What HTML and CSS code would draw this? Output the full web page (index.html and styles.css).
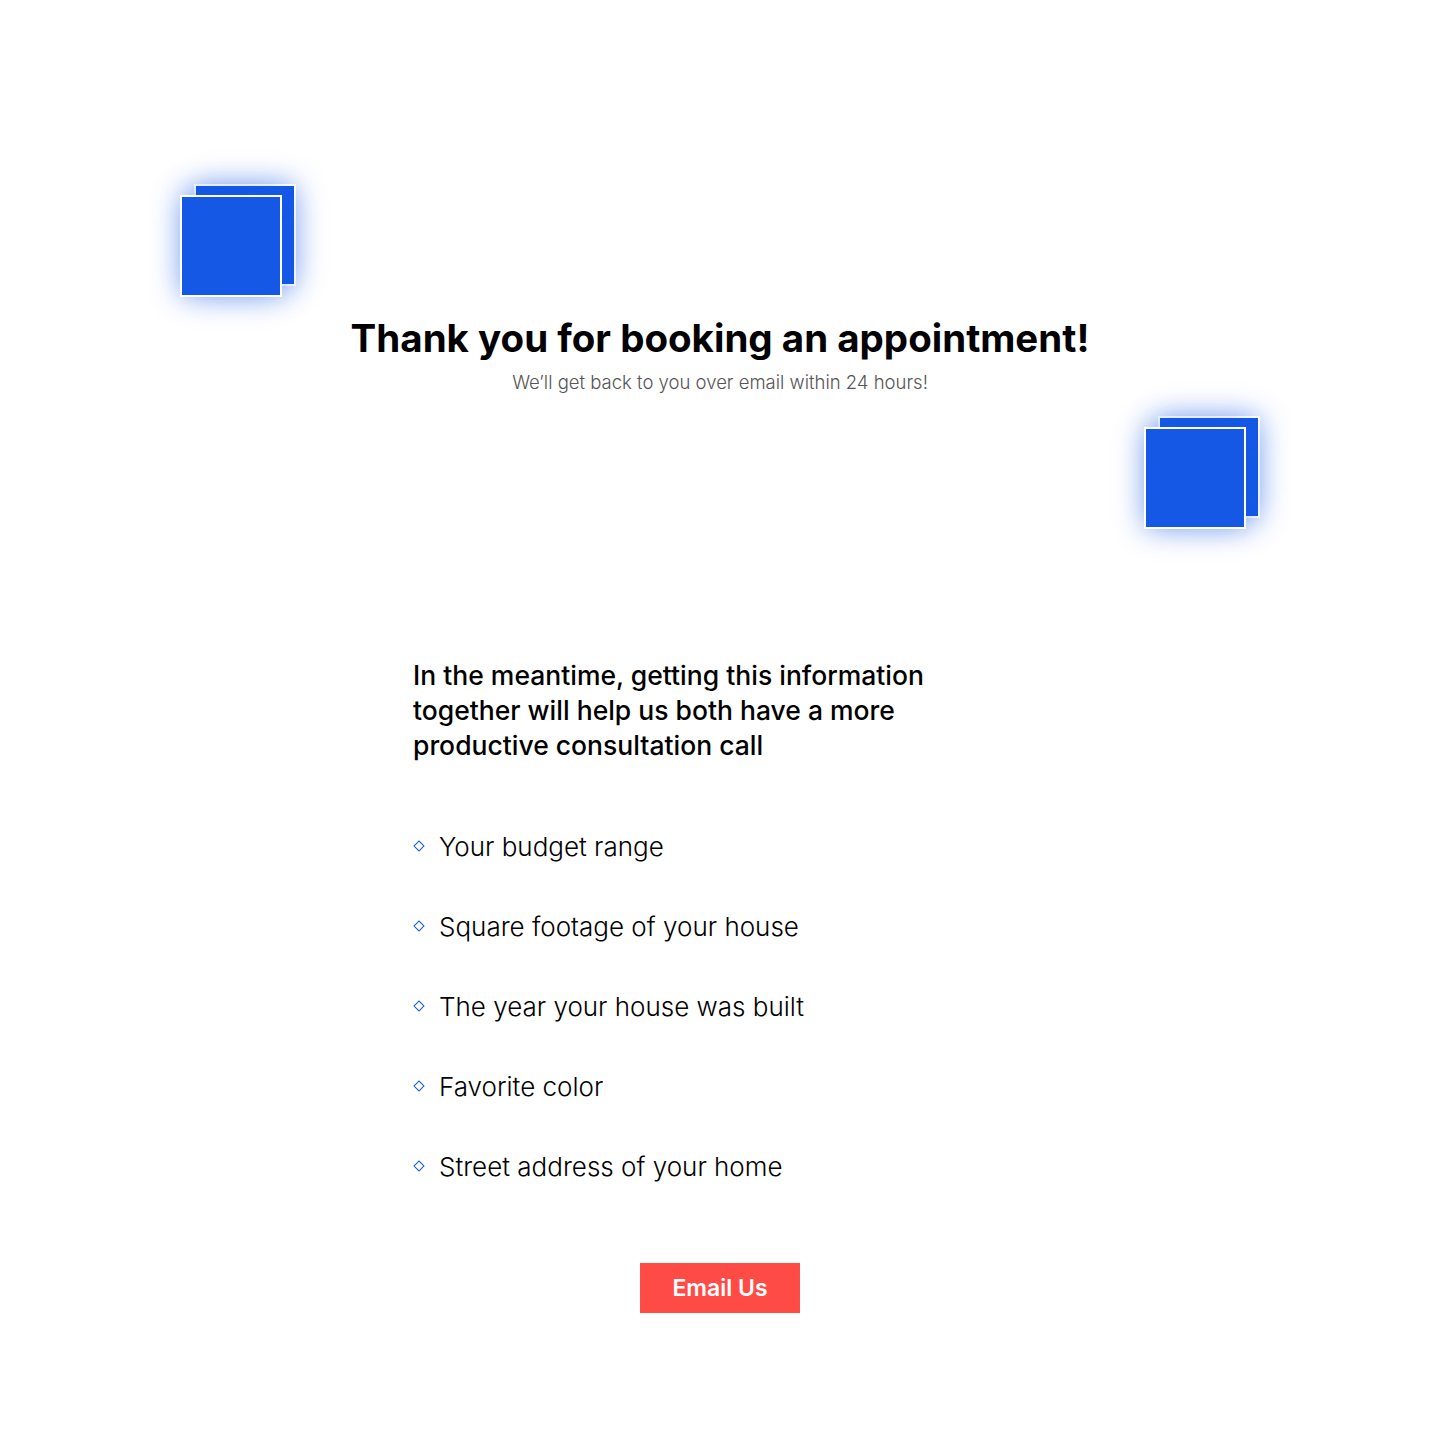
FILE: index.html
```html
<!DOCTYPE html>
<html lang="en">
<head>
<meta charset="utf-8">
<title>Thank you</title>
<link rel="stylesheet" href="styles.css">
</head>
<body>
<main class="page">
  <section class="hero">
    <div class="deco deco-left"><span class="sq sq-back"></span><span class="sq sq-front"></span></div>
    <div class="deco deco-right"><span class="sq sq-back"></span><span class="sq sq-front"></span></div>
    <h1 class="title">Thank you for booking an appointment!</h1>
    <p class="subtitle">We’ll get back to you over email within 24 hours!</p>
  </section>
  <section class="info">
    <p class="lead">In the meantime, getting this information together will help us both have a more productive consultation call</p>
    <ul class="checklist">
      <li class="item"><span class="diamond"></span><span>Your budget range</span></li>
      <li class="item"><span class="diamond"></span><span>Square footage of your house</span></li>
      <li class="item"><span class="diamond"></span><span>The year your house was built</span></li>
      <li class="item"><span class="diamond"></span><span>Favorite color</span></li>
      <li class="item"><span class="diamond"></span><span>Street address of your home</span></li>
    </ul>
    <div class="actions"><a class="btn" href="#">Email Us</a></div>
  </section>
</main>
</body>
</html>
```
FILE: styles.css
```css
* { box-sizing: border-box; }
html, body { margin: 0; padding: 0; background: #fff; }
body { font-family: Inter, "Noto Sans", sans-serif; color: #000; }
.page { width: 1440px; min-height: 1440px; }
.hero { position: relative; height: 560px; padding-top: 314px; text-align: center; }
.deco { position: absolute; width: 116px; height: 113px; }
.deco-left { left: 180px; top: 184px; }
.deco-right { left: 1144px; top: 416px; }
.sq { position: absolute; width: 102px; height: 102px; background: #1558e6; border: 2px solid #fff; box-shadow: 0 0 28px rgba(21, 88, 230, 0.45); }
.sq-back { left: 14px; top: 0; }
.sq-front { left: 0; top: 11px; }
.title { margin: 0; font-size: 38.5px; font-weight: 700; letter-spacing: 0; line-height: 48px; }
.subtitle { margin: 8px 0 0; font-size: 18.5px; font-weight: 300; color: #555; line-height: 24px; }
.info { width: 1440px; padding-left: 413px; padding-top: 98px; }
.lead { margin: 0; width: 560px; font-size: 26.5px; font-weight: 450; line-height: 35px; letter-spacing: 0; }
.checklist { list-style: none; margin: 43px 0 0; padding: 0; }
.item { display: flex; align-items: center; gap: 16px; height: 80px; font-size: 26px; font-weight: 300; }
.diamond { width: 8px; height: 8px; border: 1.5px solid #1558e6; transform: rotate(45deg); margin-left: 2px; }
.actions { width: 614px; display: flex; justify-content: center; padding-top: 57px; }
.btn { display: flex; align-items: center; justify-content: center; width: 160px; height: 50px; background: #ff4b45; color: #fff; font-size: 23px; font-weight: 600; text-decoration: none; }
```
